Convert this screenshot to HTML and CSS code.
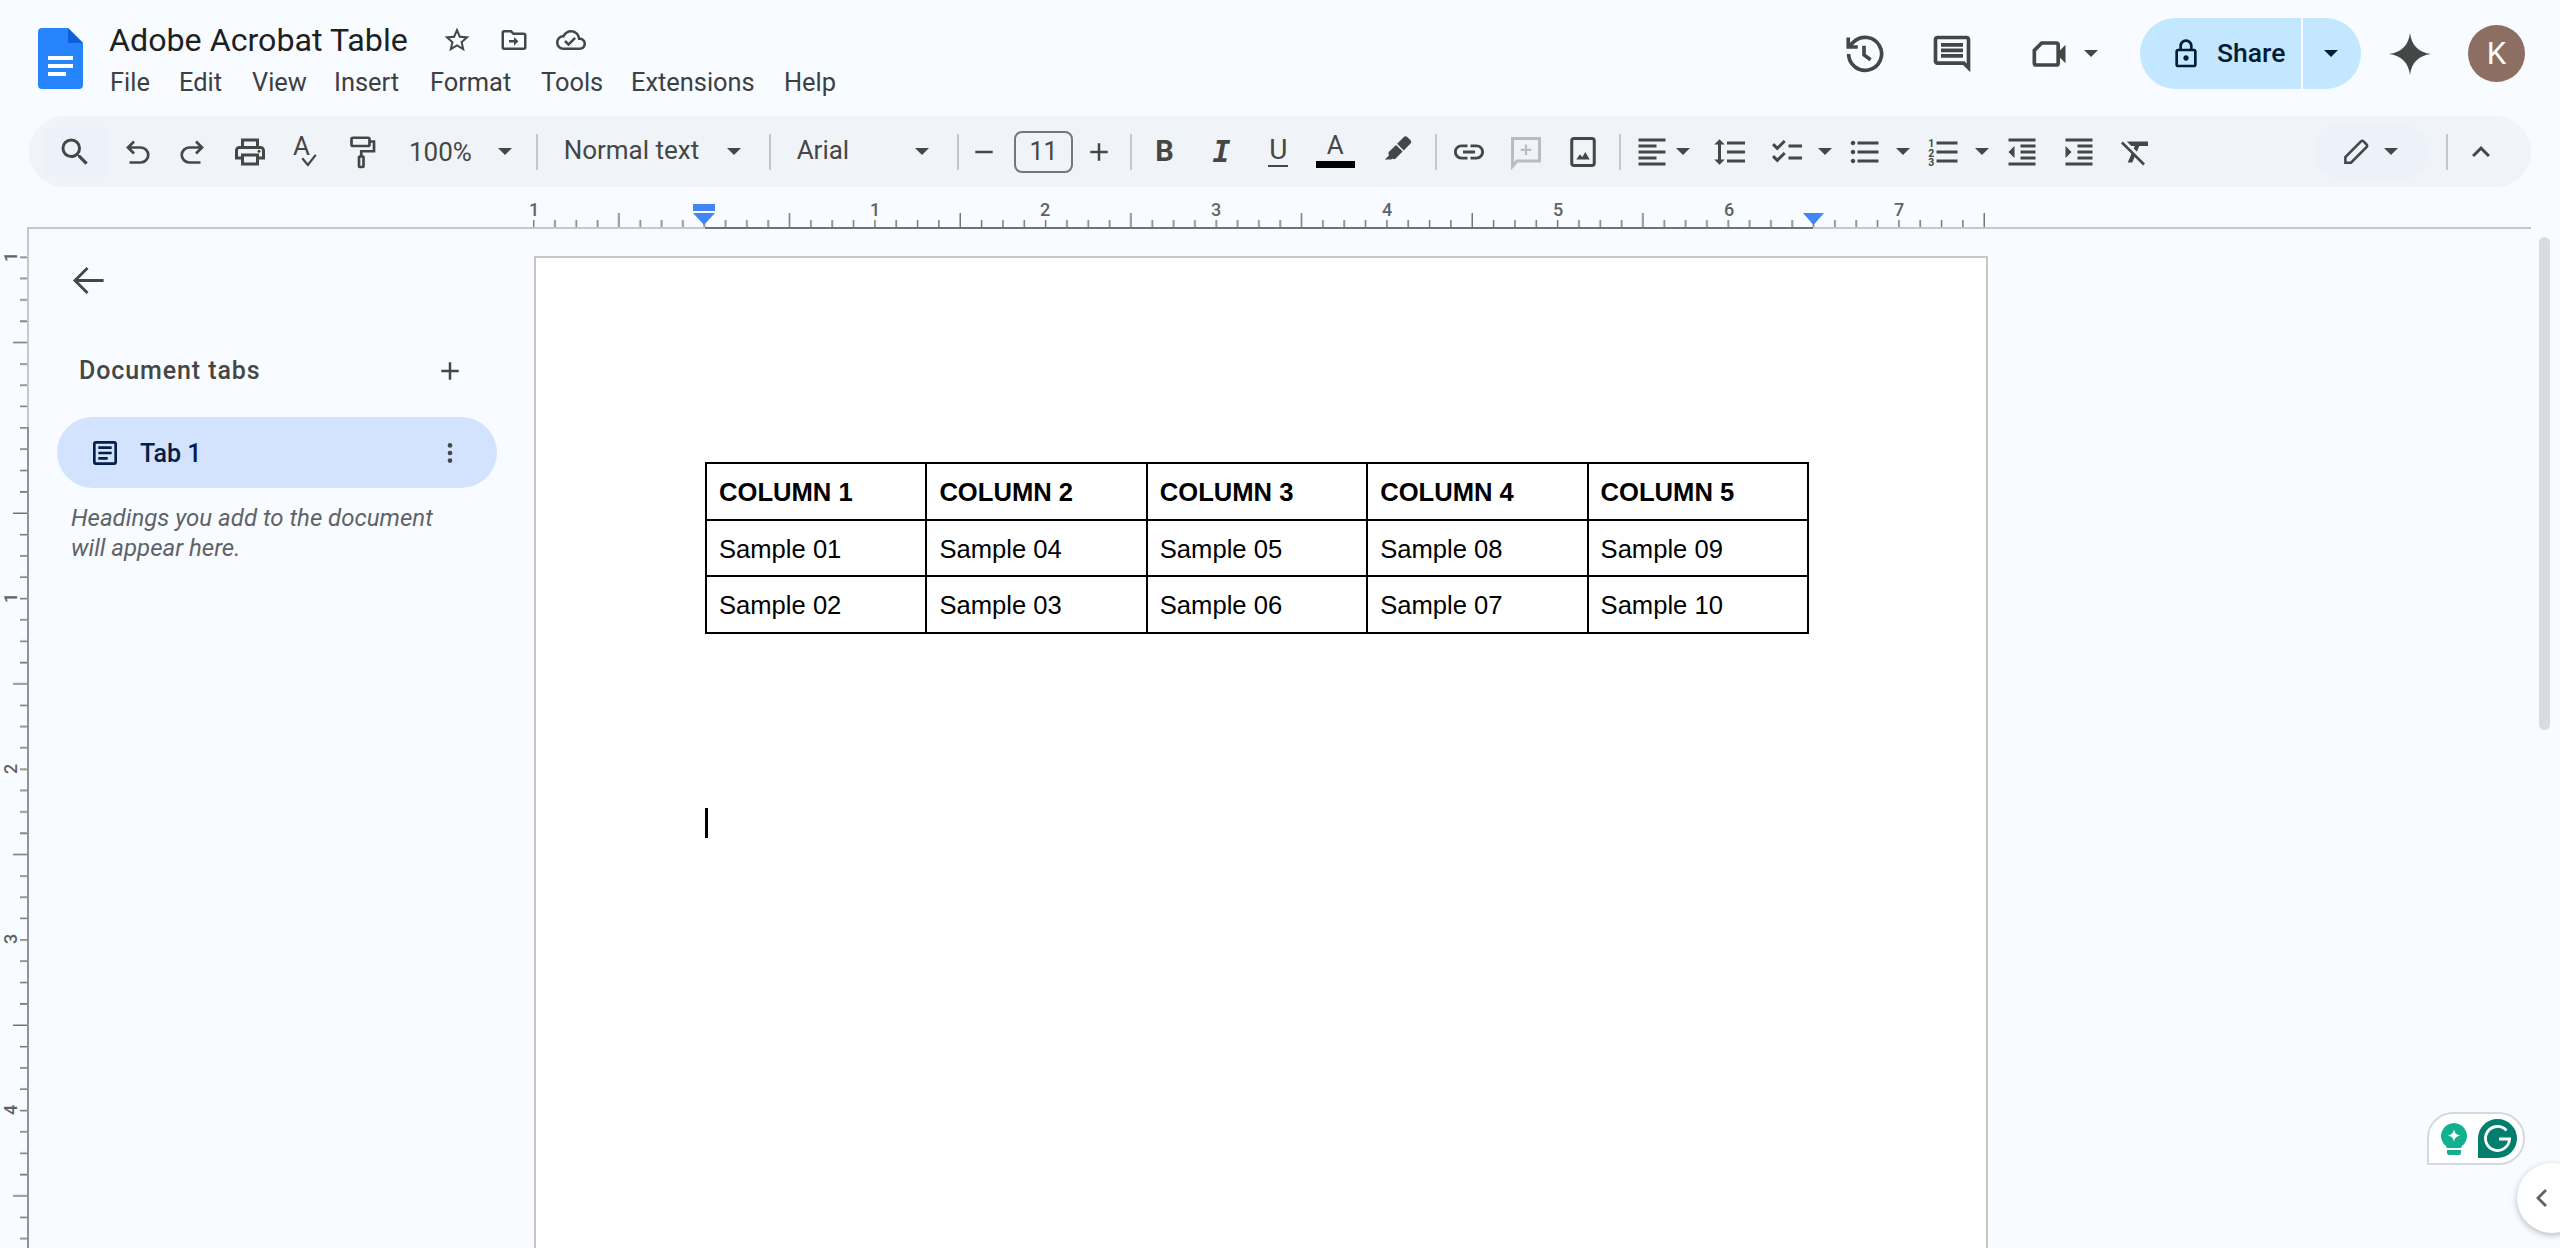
FILE: index.html
```html
<!DOCTYPE html>
<html lang="en">
<head>
  <meta charset="UTF-8" />
  <title>Adobe Acrobat Table - Google Docs</title>
  <link rel="stylesheet" href="styles.css">
</head>
<body>

  <!-- Title bar -->
  <header class="topbar">
    <svg class="logo" viewBox="0 0 45 61">
      <path d="M4 0h26l15 15v42a4 4 0 0 1-4 4H4a4 4 0 0 1-4-4V4a4 4 0 0 1 4-4z" fill="#2684fc"/>
      <path d="M30 0l15 15H30z" fill="#0f5fd6"/>
      <path d="M10 28h25v4H10zM10 36h25v4H10zM10 44h18v4H10z" fill="#fff"/>
    </svg>
    <div class="doc-head">
      <div class="title-row">
        <span class="doc-title">Adobe Acrobat Table</span>
        <svg class="icon title-icon star-icon" viewBox="0 0 24 24"><path d="M22 9.24l-7.19-.62L12 2 9.19 8.63 2 9.24l5.46 4.73L5.82 21 12 17.27 18.18 21l-1.63-7.03L22 9.24zM12 15.4l-3.76 2.27 1-4.28-3.32-2.88 4.38-.38L12 6.1l1.71 4.04 4.38.38-3.32 2.88 1 4.28L12 15.4z"/></svg>
        <svg class="icon title-icon" viewBox="0 0 24 24"><path d="M20 6h-8l-2-2H4c-1.1 0-2 .9-2 2v12c0 1.1.9 2 2 2h16c1.1 0 2-.9 2-2V8c0-1.1-.9-2-2-2zm0 12H4V6h5.17l2 2H20v10z"/><path d="M12 9.5l3.5 3.5-3.5 3.5V14H8v-2h4z"/></svg>
        <svg class="icon title-icon" viewBox="0 0 24 24"><path d="M19.35 10.04C18.67 6.59 15.64 4 12 4 9.11 4 6.6 5.64 5.35 8.04 2.34 8.36 0 10.91 0 14c0 3.31 2.69 6 6 6h13c2.76 0 5-2.24 5-5 0-2.64-2.05-4.78-4.65-4.96zM19 18H6c-2.21 0-4-1.79-4-4 0-2.05 1.53-3.76 3.56-3.97l1.07-.11.5-.95C8.08 7.14 9.94 6 12 6c2.62 0 4.88 1.86 5.39 4.43l.3 1.5 1.53.11c1.56.1 2.78 1.41 2.78 2.96 0 1.65-1.35 3-3 3zm-9-3.82l-2.09-2.09L6.5 13.5 10 17l6.01-6.01-1.41-1.41z"/></svg>
      </div>
      <nav class="menu">
        <span>File</span><span>Edit</span><span>View</span><span>Insert</span><span>Format</span><span>Tools</span><span>Extensions</span><span>Help</span>
      </nav>
    </div>
    <div class="top-actions">
      <svg class="icon icon-line top-icon" viewBox="0 0 24 24" stroke="#444746" stroke-width="2"><path d="M3.6 12a9 9 0 1 0 2.8-6.6L3.6 8M3.4 3v5.2h5.2M12 7.5v5l3.6 2.6"/></svg>
      <svg class="icon top-icon comment-icon" viewBox="0 0 24 24"><path d="M21.99 4c0-1.1-.89-2-1.99-2H4c-1.1 0-2 .9-2 2v12c0 1.1.9 2 2 2h14l4 4-.01-18zM20 4v13.17L18.83 16H4V4h16zM6 12h12v2H6zm0-3h12v2H6zm0-3h12v2H6z"/></svg>
      <svg class="icon top-icon meet-icon" viewBox="0 0 24 24"><path d="M8 6h8a1 1 0 0 1 1 1v10a1 1 0 0 1-1 1H5a1 1 0 0 1-1-1v-7z" fill="none" stroke="#444746" stroke-width="2"/><path d="M17 11l4-4v10l-4-4z"/></svg>
      <span class="caret meet-caret"></span>
      <div class="share">
        <div class="share-main">
          <svg class="icon share-lock" viewBox="0 0 24 24"><path d="M18 8h-1V6c0-2.76-2.24-5-5-5S7 3.24 7 6v2H6c-1.1 0-2 .9-2 2v10c0 1.1.9 2 2 2h12c1.1 0 2-.9 2-2V10c0-1.1-.9-2-2-2zM9 6c0-1.66 1.34-3 3-3s3 1.34 3 3v2H9V6zm9 14H6V10h12v10zm-6-3c1.1 0 2-.9 2-2s-.9-2-2-2-2 .9-2 2 .9 2 2 2z"/></svg>
          <span class="share-label">Share</span>
        </div>
        <div class="share-more"><span class="caret"></span></div>
      </div>
      <svg class="icon spark" viewBox="0 0 24 24"><path d="M12 0C12.8 7 17 11.2 24 12 17 12.8 12.8 17 12 24 11.2 17 7 12.8 0 12 7 11.2 11.2 7 12 0z"/></svg>
      <div class="avatar">K</div>
    </div>
  </header>

  <!-- Toolbar -->
  <div class="toolbar">
    <div class="tb tb-search"><svg class="icon" viewBox="0 0 24 24"><path d="M15.5 14h-.79l-.28-.27A6.471 6.471 0 0 0 16 9.5 6.5 6.5 0 1 0 9.5 16c1.61 0 3.09-.59 4.23-1.57l.27.28v.79l5 4.99L20.49 19l-4.99-5zm-6 0C7.01 14 5 11.99 5 9.5S7.01 5 9.5 5 14 7.01 14 9.5 11.99 14 9.5 14z"/></svg></div>
    <div class="tb tb-sm"><svg class="icon icon-line" viewBox="0 0 24 24" stroke="#444746" stroke-width="1.8"><path d="M10 5L6 9l4 4M6 9h8.5a4.5 4.5 0 0 1 0 10H7"/></svg></div>
    <div class="tb tb-sm"><svg class="icon icon-line" viewBox="0 0 24 24" stroke="#444746" stroke-width="1.8"><path d="M14 5l4 4-4 4M18 9H9.5a4.5 4.5 0 0 0 0 10H17"/></svg></div>
    <div class="tb tb-sm tb-print"><svg class="icon" viewBox="0 0 24 24"><path d="M19 8h-1V3H6v5H5c-1.66 0-3 1.34-3 3v6h4v4h12v-4h4v-6c0-1.66-1.34-3-3-3zM8 5h8v3H8V5zm8 12v2H8v-4h8v2zm2-2v-2H6v2H4v-4c0-.55.45-1 1-1h14c.55 0 1 .45 1 1v4h-2z"/><circle cx="18" cy="11.5" r="1"/></svg></div>
    <div class="tb tb-sm spell"><span class="spell-a">A</span><svg class="spell-check" viewBox="0 0 16 12" fill="none" stroke="#444746" stroke-width="2"><path d="M2 4l5 6 7-9"/></svg></div>
    <div class="tb tb-sm"><svg class="icon icon-line" viewBox="0 0 24 24" stroke="#444746" stroke-width="1.8"><rect x="5" y="2.5" width="12" height="5.5" rx="1"/><path d="M17 5h3v6.5h-8.5V15"/><rect x="10" y="15" width="3" height="7" rx=".5"/></svg></div>
    <div class="sel sel-zoom"><span>100%</span><span class="caret"></span></div>
    <span class="sep"></span>
    <div class="sel sel-style"><span class="sel-label">Normal text</span><span class="caret"></span></div>
    <span class="sep"></span>
    <div class="sel sel-font"><span class="sel-label">Arial</span><span class="caret"></span></div>
    <span class="sep"></span>
    <div class="tb tb-minus"><svg class="icon" viewBox="0 0 24 24"><path d="M5 11h14v2H5z"/></svg></div>
    <div class="size-box">11</div>
    <div class="tb tb-plus"><svg class="icon" viewBox="0 0 24 24"><path d="M19 13h-6v6h-2v-6H5v-2h6V5h2v6h6z"/></svg></div>
    <span class="sep"></span>
    <div class="tb"><span class="glyph glyph-b">B</span></div>
    <div class="tb"><span class="glyph glyph-i">I</span></div>
    <div class="tb"><span class="glyph glyph-u">U</span></div>
    <div class="tb text-color"><span class="glyph glyph-a">A</span><span class="color-bar"></span></div>
    <div class="tb tb-high"><svg class="icon" viewBox="0 0 24 24"><path d="M18.5 1.15c-.53 0-1.04.19-1.43.58l-5.81 5.81 5.65 5.65 5.82-5.81c.77-.78.77-2.04 0-2.83l-2.84-2.84c-.39-.39-.89-.56-1.39-.56zM10.3 8.5l-5.96 5.96c-.78.78-.78 2.04.02 2.85C3.14 18.54 1.9 19.77.67 21h5.66l.86-.86c.78.76 2.03.75 2.81-.02l5.95-5.96L10.3 8.5z"/></svg></div>
    <span class="sep"></span>
    <div class="tb"><svg class="icon" viewBox="0 0 24 24"><path d="M3.9 12c0-1.71 1.39-3.1 3.1-3.1h4V7H7c-2.76 0-5 2.24-5 5s2.24 5 5 5h4v-1.9H7c-1.71 0-3.1-1.39-3.1-3.1zM8 13h8v-2H8v2zm9-6h-4v1.9h4c1.71 0 3.1 1.39 3.1 3.1s-1.39 3.1-3.1 3.1h-4V17h4c2.76 0 5-2.24 5-5s-2.24-5-5-5z"/></svg></div>
    <div class="tb"><svg class="icon icon-line" viewBox="0 0 24 24" stroke="#b9bdc2" stroke-width="2"><path d="M3 3h18v15H6l-3 3.5z"/><path d="M12 7v7M8.5 10.500h7" stroke-width="1.5"/></svg></div>
    <div class="tb tb-image"><svg class="icon" viewBox="0 0 24 24"><rect x="4.5" y="3" width="15" height="18" rx="1.5" fill="none" stroke="#444746" stroke-width="2"/><path d="M7.5 17l2.5-3.5 1.5 2 2-3.5 3 5z"/></svg></div>
    <span class="sep"></span>
    <div class="tb tb-align"><svg class="icon" viewBox="0 0 24 24"><path d="M15 15H3v2h12v-2zm0-8H3v2h12V7zM3 13h18v-2H3v2zm0 8h18v-2H3v2zM3 3v2h18V3H3z"/></svg></div>
    <span class="caret tb-caret align-caret"></span>
    <div class="tb"><svg class="icon" viewBox="0 0 24 24"><path d="M6 7h2.5L5 3.5 1.5 7H4v10H1.5L5 20.5 8.5 17H6V7zm4-2v2h12V5H10zm0 14h12v-2H10v2zm0-6h12v-2H10v2z"/></svg></div>
    <div class="tb"><svg class="icon" viewBox="0 0 24 24"><path d="M22 7h-9v2h9V7zm0 8h-9v2h9v-2zM5.54 11L2 7.46l1.41-1.41 2.12 2.12 4.24-4.24 1.41 1.41L5.54 11zm0 8L2 15.46l1.41-1.41 2.12 2.12 4.24-4.24 1.41 1.41L5.54 19z"/></svg></div>
    <span class="caret tb-caret"></span>
    <div class="tb"><svg class="icon" viewBox="0 0 24 24"><path d="M4 10.5c-.83 0-1.5.67-1.5 1.5s.67 1.5 1.5 1.5 1.5-.67 1.5-1.5-.67-1.5-1.5-1.5zm0-6c-.83 0-1.5.67-1.5 1.5S3.17 7.5 4 7.5 5.5 6.83 5.5 6 4.83 4.5 4 4.5zm0 12c-.83 0-1.5.68-1.5 1.5s.68 1.5 1.5 1.5 1.5-.68 1.5-1.5-.67-1.5-1.5-1.5zM7 19h14v-2H7v2zm0-6h14v-2H7v2zm0-8v2h14V5H7z"/></svg></div>
    <span class="caret tb-caret"></span>
    <div class="tb"><svg class="icon" viewBox="0 0 24 24"><path d="M7 5v2h14V5H7zm0 14h14v-2H7v2zm0-6h14v-2H7v2z"/><text class="list-num" x="1.5" y="8.5">1</text><text class="list-num" x="1.5" y="15">2</text><text class="list-num" x="1.5" y="21.5">3</text></svg></div>
    <span class="caret tb-caret"></span>
    <div class="tb"><svg class="icon" viewBox="0 0 24 24"><path d="M11 17h10v-2H11v2zm-8-5l4 4V8l-4 4zm0 9h18v-2H3v2zM3 3v2h18V3H3zm8 6h10V7H11v2zm0 4h10v-2H11v2z"/></svg></div>
    <div class="tb"><svg class="icon" viewBox="0 0 24 24"><path d="M3 21h18v-2H3v2zM3 8v8l4-4-4-4zm8 9h10v-2H11v2zM3 3v2h18V3H3zm8 6h10V7H11v2zm0 4h10v-2H11v2z"/></svg></div>
    <div class="tb"><svg class="icon" viewBox="0 0 24 24"><path d="M3.27 5L2 6.27l6.97 6.97L6.5 19h3l1.57-3.66L16.73 21 18 19.73 3.55 5.27 3.27 5zM6 5v.18L8.82 8h2.4l-.72 1.68 2.1 2.1L14.21 8H20V5H6z"/></svg></div>
    <div class="edit-mode">
      <svg class="icon icon-line edit-pen" viewBox="0 0 24 24" stroke="#444746" stroke-width="2"><path d="M3.5 20.5V16L16 3.5a1.4 1.4 0 0 1 2 0L20.5 6a1.4 1.4 0 0 1 0 2L8 20.5z"/></svg>
      <span class="caret"></span>
    </div>
    <span class="sep"></span>
    <div class="tb"><svg class="icon" viewBox="0 0 24 24"><path d="M7.41 15.41L12 10.83l4.59 4.58L18 14l-6-6-6 6z"/></svg></div>
  </div>

  <!-- Horizontal ruler -->
  <svg class="hruler" width="2560" height="42">
    <defs>
      <pattern id="hticks" patternUnits="userSpaceOnUse" x="703.5" y="0" width="170.667" height="42">
        <path d="M.75 33v8M22.08 33v8M43.42 33v8M64.75 33v8M86.08 26v15M107.42 33v8M128.75 33v8M150.08 33v8" stroke="#757575" stroke-width="1.5" fill="none"/>
      </pattern>
    </defs>
    <rect x="533" y="0" width="1454" height="41" fill="url(#hticks)"/>
    <rect x="27" y="40" width="2504" height="2" fill="#c7c7c7"/>
    <rect x="705" y="40" width="1108" height="2" fill="#6f7276"/>
    <g class="ruler-num" text-anchor="middle">
      <text x="534" y="29">1</text><text x="875" y="29">1</text><text x="1045" y="29">2</text><text x="1216" y="29">3</text><text x="1387" y="29">4</text><text x="1558" y="29">5</text><text x="1729" y="29">6</text><text x="1899" y="29">7</text>
    </g>
    <rect x="693" y="17" width="22" height="7" fill="#4285f4"/>
    <path d="M693 26h22l-11 12zM1803 26h21l-10.5 12z" fill="#4285f4"/>
  </svg>

  <div class="workspace">
    <!-- Vertical ruler -->
    <svg class="vruler" width="29" height="1019">
      <defs>
        <pattern id="vticks" patternUnits="userSpaceOnUse" x="0" y="27.5" width="29" height="170.667">
          <path d="M20 .75h8M20 22.08h8M20 43.42h8M20 64.75h8M13 86.08h15M20 107.42h8M20 128.75h8M20 150.08h8" stroke="#757575" stroke-width="1.5" fill="none"/>
        </pattern>
      </defs>
      <rect x="0" y="27" width="28" height="992" fill="url(#vticks)"/>
      <rect x="27" y="0" width="2" height="198" fill="#c7c7c7"/>
      <rect x="27" y="198" width="2" height="821" fill="#8f9296"/>
      <g class="ruler-num" text-anchor="middle">
        <text transform="translate(17 28) rotate(-90)">1</text>
        <text transform="translate(17 369) rotate(-90)">1</text>
        <text transform="translate(17 540) rotate(-90)">2</text>
        <text transform="translate(17 710) rotate(-90)">3</text>
        <text transform="translate(17 881) rotate(-90)">4</text>
      </g>
    </svg>

    <!-- Tabs sidebar -->
    <aside class="sidebar">
      <svg class="icon icon-line back-icon" viewBox="0 0 24 24" stroke="#444746" stroke-width="1.6"><path d="M21 12H5M12 5l-7 7 7 7"/></svg>
      <div class="tabs-head">
        <span>Document tabs</span>
        <svg class="icon head-plus" viewBox="0 0 24 24"><path d="M19 13h-6v6h-2v-6H5v-2h6V5h2v6h6z"/></svg>
      </div>
      <div class="tab-pill">
        <svg class="icon tab-doc" viewBox="0 0 24 24"><path d="M19 5v14H5V5h14m0-2H5c-1.1 0-2 .9-2 2v14c0 1.1.9 2 2 2h14c1.1 0 2-.9 2-2V5c0-1.1-.9-2-2-2z"/><path d="M14 17H7v-2h7v2zm3-4H7v-2h10v2zm0-4H7V7h10v2z"/></svg>
        <span class="tab-name">Tab 1</span>
        <svg class="icon tab-more" viewBox="0 0 24 24"><circle cx="12" cy="5.5" r="2"/><circle cx="12" cy="12" r="2"/><circle cx="12" cy="18.5" r="2"/></svg>
      </div>
      <p class="tabs-note">Headings you add to the document will appear here.</p>
    </aside>

    <!-- Document page -->
    <main class="page">
      <table class="doc-table">
        <tr class="head-row"><td>COLUMN 1</td><td>COLUMN 2</td><td>COLUMN 3</td><td>COLUMN 4</td><td>COLUMN 5</td></tr>
        <tr><td>Sample 01</td><td>Sample 04</td><td>Sample 05</td><td>Sample 08</td><td>Sample 09</td></tr>
        <tr><td>Sample 02</td><td>Sample 03</td><td>Sample 06</td><td>Sample 07</td><td>Sample 10</td></tr>
      </table>
      <div class="text-cursor"></div>
    </main>

    <div class="scrollbar"></div>
  </div>

  <!-- Grammarly widget -->
  <div class="grammarly">
    <svg class="gr-bulb" viewBox="0 0 28 34">
      <path d="M14 1a13 13 0 0 1 7.5 23.6V26h-15v-1.4A13 13 0 0 1 14 1z" fill="#12b08f"/>
      <path d="M7 28h14v3a2 2 0 0 1-2 2H9a2 2 0 0 1-2-2z" fill="#12b08f"/>
      <path d="M14 7c.6 4 2.5 6 6.5 6.5-4 .6-5.9 2.5-6.5 6.5-.6-4-2.5-5.900-6.5-6.5C11.5 13 13.4 11 14 7z" fill="#fff"/>
    </svg>
    <svg class="gr-logo" viewBox="0 0 39 39">
      <path d="M0 39V19.5A19.5 19.5 0 1 1 19.5 39z" fill="#027e6f"/>
      <path d="M28.5 11.5A12 12 0 1 0 31.5 20H21" fill="none" stroke="#fff" stroke-width="2.8"/>
    </svg>
  </div>
  <div class="side-toggle">
    <svg class="side-chevron" viewBox="0 0 14 20" fill="none" stroke="#5f6368" stroke-width="2.8"><path d="M11 2L3 10l8 8"/></svg>
  </div>

</body>
</html>
```

FILE: styles.css
```css
* {
  box-sizing: border-box;
}

html,
body {
  margin: 0;
  height: 100%;
}

body {
  position: relative;
  width: 2560px;
  height: 1248px;
  overflow: hidden;
  background-color: #f8fbff;
  font-family: Roboto, "Liberation Sans", sans-serif;
  color: #444746;
}

.icon {
  display: block;
  width: 36px;
  height: 36px;
  fill: #444746;
  flex: none;
}

.icon.icon-line {
  fill: none;
}

/* Title bar */
.topbar {
  display: flex;
  height: 116px;
  padding-left: 38px;
}

.logo {
  width: 45px;
  height: 61px;
  margin-top: 28px;
  flex: none;
}

.doc-head {
  margin-left: 26px;
  padding-top: 20px;
}

.title-row {
  display: flex;
  align-items: center;
  height: 40px;
}

.doc-title {
  font-size: 32.2px;
  color: #1f1f1f;
  width: 330px;
  white-space: nowrap;
}

.title-icon {
  width: 30px;
  height: 30px;
  margin-right: 27px;
}

.star-icon {
  margin-left: 3px;
}

.menu {
  display: flex;
  margin-top: 6px;
  font-size: 25.4px;
  line-height: 32px;
  color: #3c4043;
}

.menu span:nth-child(1) { margin-left: 1px; width: 69px; }
.menu span:nth-child(2) { width: 73px; }
.menu span:nth-child(3) { width: 82px; }
.menu span:nth-child(4) { width: 96px; }
.menu span:nth-child(5) { width: 111px; }
.menu span:nth-child(6) { width: 90px; }
.menu span:nth-child(7) { width: 153px; }

.top-actions {
  display: flex;
  align-items: center;
  margin-left: auto;
  height: 107px;
  padding-right: 35px;
}

.top-icon {
  width: 44px;
  height: 44px;
}

.comment-icon {
  margin-left: 44px;
}

.meet-icon {
  margin-left: 53px;
}

.meet-caret {
  margin-left: 13px;
}

.share {
  display: flex;
  height: 71px;
  margin-left: 42px;
  border-radius: 36px;
  overflow: hidden;
  color: #001d35;
  font-size: 26.5px;
  font-weight: 500;
}

.share-main {
  display: flex;
  align-items: center;
  width: 161px;
  padding-left: 30px;
  gap: 15px;
  background-color: #c2e7ff;
}

.share-lock {
  width: 32px;
  height: 32px;
  fill: #001d35;
}

.share-label {
  margin-top: -2px;
}

.share-more {
  display: flex;
  align-items: center;
  justify-content: center;
  width: 60px;
  padding-right: 2px;
  border-left: 2px solid #f8fbff;
  background-color: #c2e7ff;
}

.share-more .caret {
  border-top-color: #001d35;
}

.spark {
  width: 42px;
  height: 42px;
  margin-left: 28px;
}

.avatar {
  display: flex;
  align-items: center;
  justify-content: center;
  width: 57px;
  height: 57px;
  margin-left: 37px;
  border-radius: 50%;
  background-color: #8d6e63;
  color: #fff;
  font-size: 31px;
}

.caret {
  display: block;
  width: 0;
  height: 0;
  border-left: 7px solid transparent;
  border-right: 7px solid transparent;
  border-top: 7px solid #444746;
  flex: none;
}

/* Toolbar */
.toolbar {
  display: flex;
  align-items: center;
  height: 71px;
  margin: 0 29px;
  padding: 0 22px 0 16px;
  border-radius: 36px;
  background-color: #f0f4f9;
  font-size: 26px;
}

.tb {
  display: flex;
  align-items: center;
  justify-content: center;
  position: relative;
  width: 56.9px;
  height: 50px;
  flex: none;
}

.tb-search {
  width: 63.5px;
  padding-right: 4px;
  background-color: #edf2fa;
  border-radius: 8px;
}

.tb-sm {
  width: 56.3px;
}

.tb-print {
  padding-left: 2px;
}

.spell-a {
  font-size: 26px;
  line-height: 1;
  margin: -12px 0 0 -8px;
}

.spell-check {
  position: absolute;
  left: 23px;
  top: 26px;
  width: 18px;
  height: 15px;
}

.sel {
  display: flex;
  align-items: center;
  justify-content: space-between;
  flex: none;
}

.sel-label {
  margin-top: -3px;
}

.sel-zoom {
  width: 139.65px;
  padding: 0 18px 0 19px;
}

.sel-style {
  width: 221px;
  padding: 0 22px 0 22px;
}

.sel-font {
  width: 176px;
  padding: 0 22px 0 22px;
}

.sep {
  display: block;
  width: 2px;
  height: 36px;
  margin: 0 4px 0 6px;
  background-color: #c7c7c7;
  flex: none;
}

.tb-minus {
  width: 42.5px;
}

.tb-plus {
  width: 40px;
  margin-left: 6px;
  margin-right: 5px;
}

.tb-minus .icon,
.tb-plus .icon {
  width: 30px;
  height: 30px;
}

.size-box {
  display: flex;
  align-items: center;
  justify-content: center;
  width: 59px;
  height: 42px;
  margin-left: 9px;
  border: 2px solid #747775;
  border-radius: 8px;
  font-size: 25px;
  flex: none;
}

.glyph {
  line-height: 1;
  color: #444746;
}

.glyph-b {
  font-size: 29px;
  font-weight: 700;
}

.glyph-i {
  font-family: "DejaVu Sans Mono", monospace;
  font-size: 30px;
  font-weight: 700;
  font-style: italic;
}

.glyph-u {
  font-size: 28px;
  padding: 0 1px 1px;
  border-bottom: 2px solid #444746;
}

.text-color {
  flex-direction: column;
}

.glyph-a {
  font-size: 26px;
  margin-top: -3px;
}

.color-bar {
  display: block;
  width: 39px;
  height: 7px;
  margin-top: 3px;
  background-color: #000;
}

.tb-high {
  margin-left: 6px;
  margin-right: 2px;
}

.tb-high .icon {
  width: 28px;
  height: 28px;
  margin-top: -6px;
}

.tb-image {
  margin-right: 2px;
}

.tb-align {
  width: 53px;
}

.tb-caret {
  margin: 0 5px 0 2.5px;
}

.tb-caret.align-caret {
  margin: 0 12px 0 -2.5px;
}

.list-num {
  font-size: 7px;
  font-weight: 700;
  fill: #444746;
}

.edit-mode {
  display: flex;
  align-items: center;
  justify-content: center;
  gap: 13px;
  width: 114px;
  height: 55px;
  margin-left: auto;
  margin-right: 12px;
  border-radius: 28px;
  background-color: #edf2fa;
  flex: none;
}

.edit-pen {
  width: 30px;
  height: 30px;
  margin-left: -4px;
}

/* Rulers */
.hruler {
  display: block;
}

.ruler-num {
  font-size: 18px;
  font-weight: 500;
  fill: #5f6368;
}

.workspace {
  display: flex;
  height: 1019px;
}

.vruler {
  display: block;
  flex: none;
}

/* Sidebar */
.sidebar {
  width: 505px;
  padding: 30px 0 0 28px;
  flex: none;
}

.back-icon {
  width: 43px;
  height: 43px;
  margin-left: 9px;
}

.tabs-head {
  display: flex;
  align-items: center;
  justify-content: space-between;
  width: 438px;
  height: 43px;
  margin-top: 47px;
  padding-left: 22px;
  font-size: 25px;
  font-weight: 500;
  letter-spacing: 0.9px;
  color: #444746;
}

.head-plus {
  width: 30px;
  height: 30px;
  margin-right: 30px;
}

.tab-pill {
  display: flex;
  align-items: center;
  width: 440px;
  height: 71px;
  margin-top: 25px;
  padding-left: 32px;
  border-radius: 36px;
  background-color: #d3e3fd;
  color: #041e49;
  font-size: 25px;
  font-weight: 500;
}

.tab-doc {
  width: 32px;
  height: 32px;
  fill: #041e49;
}

.tab-name {
  margin: 1px 0 0 19px;
}

.tab-more {
  width: 28px;
  height: 28px;
  margin-left: auto;
  margin-right: 33px;
}

.tabs-note {
  width: 390px;
  margin: 15px 0 0 14px;
  font-size: 24px;
  line-height: 30px;
  font-style: italic;
  color: #5f6368;
}

/* Page */
.page {
  width: 1454px;
  height: 1200px;
  margin-top: 27px;
  padding: 204px 0 0 169px;
  border: 2px solid #c7c7c7;
  background-color: #fff;
  flex: none;
}

.doc-table {
  width: 1104px;
  table-layout: fixed;
  border-collapse: collapse;
  font-family: "Liberation Sans", Arial, sans-serif;
  font-size: 25.6px;
  color: #000;
}

.doc-table td {
  height: 56.7px;
  padding: 2px 0 0 12px;
  border: 2px solid #000;
}

.head-row td {
  font-weight: 700;
}

.text-cursor {
  width: 3px;
  height: 30px;
  margin-top: 174px;
  background-color: #000;
}

.scrollbar {
  width: 11px;
  height: 493px;
  margin: 8px 10px 0 auto;
  border-radius: 6px;
  background-color: #dadce0;
}

/* Floating widgets */
.grammarly {
  position: absolute;
  left: 2427px;
  top: 1112px;
  display: flex;
  align-items: center;
  width: 98px;
  height: 53px;
  padding-left: 11px;
  gap: 10px;
  border: 2px solid #d5d8e5;
  border-radius: 26px 26px 26px 0;
  background-color: #fff;
}

.gr-bulb {
  width: 28px;
  height: 34px;
  flex: none;
}

.gr-logo {
  width: 39px;
  height: 39px;
  flex: none;
}

.side-toggle {
  position: absolute;
  left: 2517px;
  top: 1163px;
  display: flex;
  align-items: center;
  padding-left: 18px;
  width: 70px;
  height: 70px;
  border-radius: 50%;
  background-color: #fff;
  box-shadow: 0 2px 6px rgba(60,64,67,0.35);
}

.side-chevron {
  width: 14px;
  height: 20px;
}
```
